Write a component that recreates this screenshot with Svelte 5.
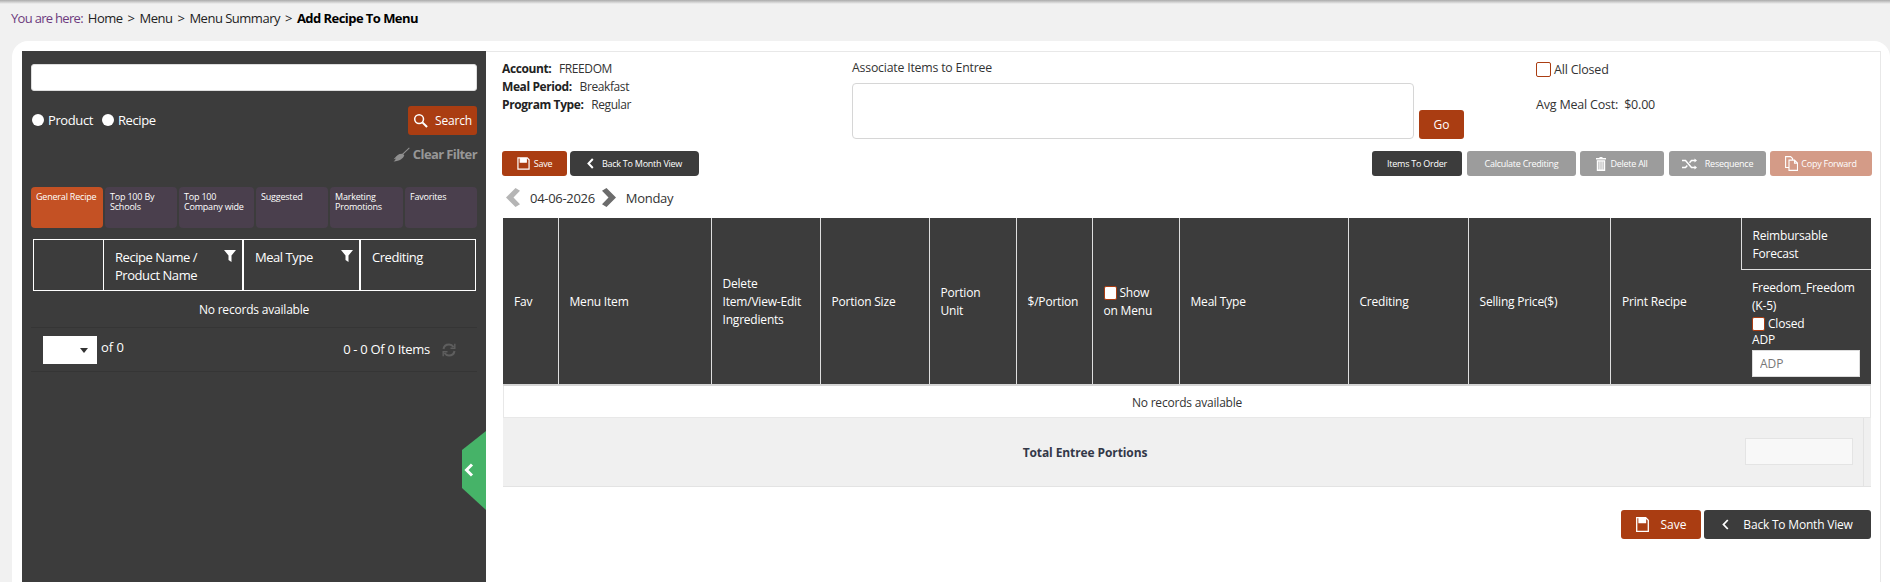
<script lang="ts">
	const tabs = [
		{ label: 'General Recipe', width: 72, active: true },
		{ label: 'Top 100 By Schools', width: 72 },
		{ label: 'Top 100 Company wide', width: 75 },
		{ label: 'Suggested', width: 72 },
		{ label: 'Marketing Promotions', width: 73 },
		{ label: 'Favorites', width: 72 }
	];

	const columns = [
		{ label: 'Fav', width: 55 },
		{ label: 'Menu Item', width: 153 },
		{ label: 'Delete Item/View-Edit Ingredients', width: 109 },
		{ label: 'Portion Size', width: 109 },
		{ label: 'Portion\nUnit', width: 87 },
		{ label: '$/Portion', width: 76 }
	];

	const trailing = [
		{ label: 'Meal Type', width: 169 },
		{ label: 'Crediting', width: 120 },
		{ label: 'Selling Price($)', width: 142.5 },
		{ label: 'Print Recipe', width: 130.5 }
	];
</script>

<div class="page">
	<div class="topbar"></div>
	<nav class="crumbs">
		<span class="here">You are here:</span>
		<span>Home</span><i>&gt;</i>
		<span>Menu</span><i>&gt;</i>
		<span>Menu Summary</span><i>&gt;</i>
		<b>Add Recipe To Menu</b>
	</nav>

	<div class="card">
		<aside class="side">
			<input class="search" type="text" />

			<div class="search-row">
				<label class="radio"><span class="dot"></span>Product</label>
				<label class="radio"><span class="dot"></span>Recipe</label>
				<button class="btn rust search-btn">
					<svg width="15" height="15" viewBox="0 0 16 16" fill="none" stroke="#fff" stroke-width="1.6">
						<circle cx="6.5" cy="6.5" r="4.7" />
						<path d="M10 10l5 5" stroke-width="2.2" />
					</svg>
					Search
				</button>
			</div>

			<div class="clear">
				<svg width="17" height="15" viewBox="0 0 17 15" fill="#8f8f8f">
					<path d="M16 .5l.7.8-6.3 6 .9 1.2C10 11.500 7 14 .5 14.500 2 13.500 2.500 12.500 2.700 11.500 2 12 1.300 12.200.6 12.300 2.500 10.500 4 8 6.500 7l2.800-.3z" />
				</svg>
				<span>Clear Filter</span>
			</div>

			<div class="tabs">
				{#each tabs as tab}
					<div class="tab" class:active={tab.active} style="width:{tab.width}px">{tab.label}</div>
				{/each}
			</div>

			<div class="side-head">
				<div class="head-cell blank"></div>
				<div class="head-cell name">
					<span>Recipe Name / Product Name</span>
					<svg class="funnel" width="12" height="12" viewBox="0 0 12 12" fill="#fff"><path d="M0 0h12L7.500 5.500V12L4.500 10V5.500z" /></svg>
				</div>
				<div class="head-cell type">
					<span>Meal Type</span>
					<svg class="funnel" width="12" height="12" viewBox="0 0 12 12" fill="#fff"><path d="M0 0h12L7.500 5.500V12L4.500 10V5.500z" /></svg>
				</div>
				<div class="head-cell cred"><span>Crediting</span></div>
			</div>

			<div class="side-empty">No records available</div>

			<div class="pager">
				<div class="page-select"><span class="caret"></span></div>
				<span class="of">of 0</span>
				<span class="items">0 - 0 Of 0 Items</span>
				<svg class="refresh" width="14" height="14" viewBox="0 0 14 14" fill="none" stroke="#5e5e5e" stroke-width="2">
					<path d="M1.500 6C2 3 4.500 1.500 7 1.500c2 0 3.500 1 4.500 2.500" />
					<path d="M12.500 8c-.5 3-3 4.500-5.500 4.500-2 0-3.500-1-4.500-2.500" />
					<path d="M12.800.8v4.400H8.500M1.200 13.200V8.800h4.300" stroke-width="1.400" />
				</svg>
			</div>

			<button class="collapse" aria-label="Collapse panel">
				<svg width="10" height="14" viewBox="0 0 10 14" fill="none" stroke="#fff" stroke-width="3"><path d="M8 1.500L2.500 7 8 12.500" /></svg>
			</button>
		</aside>

		<main class="main">
			<section class="info">
				<div class="meta">
					<div><b>Account:</b> <span>FREEDOM</span></div>
					<div><b>Meal Period:</b> <span>Breakfast</span></div>
					<div><b>Program Type:</b> <span>Regular</span></div>
				</div>
				<div class="assoc">
					<div class="assoc-label">Associate Items to Entree</div>
					<div class="assoc-row">
						<textarea></textarea>
						<button class="btn rust go">Go</button>
					</div>
				</div>
				<div class="totals">
					<label class="all-closed"><span class="check"></span>All Closed</label>
					<div class="avg">Avg Meal Cost:&nbsp; $0.00</div>
				</div>
			</section>

			<section class="toolbar">
				<button class="btn rust small save-sm">
					<svg width="13" height="13" viewBox="0 0 14 14" fill="none" stroke="#fff" stroke-width="1.300">
						<path d="M1 1h10l2 2v10H1z" />
						<path d="M3.500 1v4.500h6.500V1" fill="#fff" />
					</svg>
					Save
				</button>
				<button class="btn dark small back-sm">
					<svg width="7" height="11" viewBox="0 0 7 11" fill="none" stroke="#fff" stroke-width="2"><path d="M5.800 1L1.500 5.500l4.300 4.500" /></svg>
					Back To Month View
				</button>
				<div class="spacer"></div>
				<button class="btn dark small order">Items To Order</button>
				<button class="btn grey small calc">Calculate Crediting</button>
				<button class="btn grey small del">
					<svg width="10" height="14" viewBox="0 0 10 14" fill="#fff"><path d="M3.500 0h3v1H10v1.500H0V1h3.500zM.8 3.300h8.400V14H.8zM2.500 4.500v8h.8v-8zm2.100 0v8h.8v-8zm2.100 0v8h.8v-8z" fill-rule="evenodd" /></svg>
					Delete All
				</button>
				<button class="btn grey small reseq">
					<svg width="15" height="12" viewBox="0 0 15 12" fill="none" stroke="#fff" stroke-width="1.500">
						<path d="M0 2.500h3.500l6 7H13M0 9.500h3.500l1.800-2.100M7.500 4.700l2-2.200H13" />
						<path d="M12.500 0.500l2.500 2-2.500 2zM12.500 7.500l2.500 2-2.500 2z" fill="#fff" stroke="none" />
					</svg>
					Resequence
				</button>
				<button class="btn blush small copy">
					<svg width="13" height="15" viewBox="0 0 13 15" fill="none" stroke="#fff" stroke-width="1.100">
						<path d="M4 11.500H.6V.6h5l2 2v1.500" />
						<path d="M4 4.100h5.500l3 3v7.300H4zM9.500 4.100v3h3" />
					</svg>
					Copy Forward
				</button>
			</section>

			<section class="date-row">
				<svg width="14" height="19" viewBox="0 0 14 19" fill="#b5b5b5"><path d="M9.500 0L14 2.800 7.500 9.500l6.500 6.700L9.500 19 0 9.500z" /></svg>
				<span class="date">04-06-2026</span>
				<svg width="14" height="19" viewBox="0 0 14 19" fill="#6c6c6c"><path d="M4.500 0L0 2.800l6.500 6.700L0 16.200 4.500 19 14 9.500z" /></svg>
				<span class="day">Monday</span>
			</section>

			<table class="grid">
				<thead>
					<tr>
						{#each columns as col}
							<th rowspan="2" style="width:{col.width}px">{col.label}</th>
						{/each}
						<th rowspan="2" class="show" style="width:87px"><span class="check light"></span> Show<br />on Menu</th>
						{#each trailing as col}
							<th rowspan="2" style="width:{col.width}px">{col.label}</th>
						{/each}
						<th class="forecast">Reimbursable Forecast</th>
					</tr>
					<tr>
						<th class="school">
							Freedom_Freedom (K-5)
							<label class="closed"><span class="check light"></span>Closed</label>
							<div class="adp-label">ADP</div>
							<input class="adp" placeholder="ADP" />
						</th>
					</tr>
				</thead>
			</table>
			<div class="grid-empty">No records available</div>
			<div class="total-row">
				<b>Total Entree Portions</b>
				<input class="total-input" />
				<span class="total-edge"></span>
			</div>

			<section class="footer-actions">
				<button class="btn rust big save-lg">
					<svg width="13" height="15" viewBox="0 0 13 15" fill="none" stroke="#fff" stroke-width="1.300">
						<path d="M.7.7h9l2.600 2.600v11H.7z" />
						<path d="M3 .7v5h6.500v-5" fill="#fff" />
					</svg>
					Save
				</button>
				<button class="btn dark big back-lg">
					<svg width="7" height="11" viewBox="0 0 7 11" fill="none" stroke="#fff" stroke-width="1.800"><path d="M5.800 1L1.500 5.500l4.300 4.500" /></svg>
					Back To Month View
				</button>
			</section>
		</main>
	</div>
</div>

<style>
	:global(body) {
		margin: 0;
		background: #f1f1f1;
		font-family: 'Open Sans', 'Noto Sans', sans-serif;
		color: #333;
	}

	.page {
		height: 582px;
		overflow: hidden;
		font-size: 12px;
	}

	.topbar {
		height: 4px;
		background: linear-gradient(#ababab, #f1f1f1);
	}

	.crumbs {
		display: flex;
		gap: 5px;
		height: 37px;
		padding: 4px 0 0 11px;
		box-sizing: border-box;
		font-size: 13px;
		line-height: 20px;
		color: #222;
		letter-spacing: -0.5px;
		white-space: nowrap;
	}

	.crumbs .here {
		color: #6d3b7e;
		letter-spacing: -0.7px;
	}

	.crumbs i {
		font-style: normal;
	}

	.crumbs b {
		color: #000;
		letter-spacing: -0.55px;
	}

	.card {
		display: flex;
		height: 541px;
		margin-left: 12px;
		padding: 10px 9px 0 10px;
		box-sizing: border-box;
		background: #fff;
		border-radius: 16px 16px 0 0;
	}

	.side {
		position: relative;
		flex: 0 0 464px;
		box-sizing: border-box;
		padding: 13px 9px 0;
		background: #3c3c3c;
		color: #fff;
	}

	.search {
		display: block;
		width: 446px;
		height: 27px;
		box-sizing: border-box;
		border: 1px solid #ddd;
		border-radius: 3px;
		background: #fff;
	}

	.search-row {
		display: flex;
		align-items: center;
		gap: 8px;
		margin-top: 15px;
		height: 29px;
	}

	.radio {
		display: flex;
		align-items: center;
		gap: 4px;
		margin: -2px 0 0 1px;
		font-size: 13px;
		letter-spacing: -0.4px;
	}

	.dot {
		width: 12px;
		height: 12px;
		border-radius: 50%;
		background: #fff;
	}

	.btn {
		display: inline-flex;
		align-items: center;
		justify-content: center;
		box-sizing: border-box;
		border: 0;
		border-radius: 3px;
		color: #fff;
		font-family: inherit;
		white-space: nowrap;
		padding: 0;
	}

	.rust {
		background: #aa3d12;
	}

	.dark {
		background: #3c3c3c;
	}

	.grey {
		background: #9c9c9c;
	}

	.blush {
		background: #d49b87;
	}

	.search-btn {
		margin-left: auto;
		width: 69px;
		height: 29px;
		font-size: 12px;
		gap: 7px;
		letter-spacing: -0.2px;
	}

	.clear {
		display: flex;
		justify-content: flex-end;
		align-items: center;
		gap: 3px;
		height: 16px;
		margin-top: 11px;
		color: #979797;
		font-weight: 700;
		font-size: 13px;
		letter-spacing: -0.6px;
	}

	.tabs {
		display: flex;
		gap: 2px;
		margin-top: 25px;
	}

	.tab {
		box-sizing: border-box;
		height: 41px;
		padding: 5px 3px 0 5px;
		border-radius: 4px;
		background: #4a3f4d;
		font-size: 9px;
		line-height: 10px;
		letter-spacing: -0.2px;
	}

	.tab.active {
		background: #c45124;
		white-space: nowrap;
	}

	.side-head {
		display: flex;
		margin: 11px 1px 0 2px;
	}

	.head-cell {
		display: flex;
		justify-content: space-between;
		box-sizing: border-box;
		height: 52px;
		border: 1px solid #fff;
		padding: 8px 6px 0 11px;
		font-size: 13px;
		line-height: 18px;
		letter-spacing: -0.45px;
	}

	.blank {
		width: 70px;
		border-right: 0;
	}

	.name {
		width: 140px;
	}

	.name span {
		width: 100px;
	}

	.type {
		width: 117px;
	}

	.cred {
		width: 116px;
	}

	.funnel {
		flex: none;
		margin-top: 2px;
	}

	.side-empty {
		height: 36px;
		text-align: center;
		line-height: 38px;
		font-size: 12px;
		border-bottom: 1px solid #353535;
		letter-spacing: -0.2px;
	}

	.pager {
		display: flex;
		align-items: center;
		height: 43px;
		padding: 0 21px 0 12px;
		border-bottom: 1px solid #353535;
		font-size: 13px;
	}

	.page-select {
		position: relative;
		width: 54px;
		height: 28px;
		background: #fff;
	}

	.caret {
		position: absolute;
		left: 37px;
		top: 12px;
		border: 4px solid transparent;
		border-top: 5px solid #333;
		border-bottom: 0;
	}

	.of {
		margin: -5px 0 0 4px;
		font-size: 13px;
	}

	.items {
		margin: -1px 0 0 auto;
		letter-spacing: -0.3px;
	}

	.refresh {
		margin-left: 12px;
	}

	.collapse {
		position: absolute;
		right: 0;
		top: 380px;
		width: 24px;
		height: 79px;
		padding: 0 0 2px 2px;
		border: 0;
		background: #46b368;
		clip-path: polygon(100% 0, 0 24%, 0 72%, 100% 100%);
		display: flex;
		align-items: center;
	}

	.main {
		flex: 1;
		min-width: 0;
		box-sizing: border-box;
		padding: 0 8px 0 17px;
		border-top: 1px solid #e8e8e8;
		border-right: 1px solid #e8e8e8;
		font-size: 12px;
	}

	.info {
		display: flex;
		height: 98px;
	}

	.meta {
		flex: 0 0 349px;
		margin-left: -1px;
		padding: 8px 1px 0 0;
		line-height: 18px;
		font-size: 12px;
		letter-spacing: -0.4px;
		color: #333;
	}

	.meta b {
		color: #222;
		margin-right: 5px;
	}

	.assoc {
		flex: 0 0 684px;
	}

	.assoc-label {
		margin-top: 7px;
		line-height: 18px;
		font-size: 12.3px;
		letter-spacing: -0.2px;
	}

	.assoc-row {
		display: flex;
		align-items: flex-end;
		gap: 5px;
		margin-top: 6px;
	}

	textarea {
		display: block;
		width: 562px;
		height: 56px;
		box-sizing: border-box;
		border: 1px solid #d6d6d6;
		border-radius: 4px;
		background: #fff;
		resize: none;
		margin: 0;
	}

	.go {
		width: 45px;
		height: 29px;
		font-size: 12px;
	}

	.totals {
		padding: 9px 0 0;
		font-size: 12.5px;
		letter-spacing: -0.2px;
	}

	.all-closed {
		display: flex;
		align-items: center;
		gap: 3px;
		height: 16px;
	}

	.check {
		display: inline-block;
		width: 15px;
		height: 15px;
		box-sizing: border-box;
		border: 1px solid #aa3d12;
		border-radius: 2px;
		background: #fff;
		vertical-align: -3px;
	}

	.check.light {
		width: 13px;
		height: 14px;
	}

	.avg {
		margin-top: 19px;
		line-height: 18px;
	}

	.toolbar {
		display: flex;
		height: 25px;
		margin: 1px 0 0 -1px;
	}

	.spacer {
		flex: 1;
	}

	.small {
		height: 25px;
		font-size: 9px;
		letter-spacing: -0.25px;
	}

	.save-sm {
		width: 65px;
		gap: 4px;
		margin-right: 3px;
	}

	.back-sm {
		width: 129px;
		gap: 8px;
		border-radius: 4px;
	}

	.order {
		width: 90px;
		margin-right: 5px;
	}

	.calc {
		width: 109px;
		margin-right: 4px;
	}

	.del {
		width: 84px;
		gap: 4px;
		margin-right: 5px;
	}

	.reseq {
		width: 97px;
		gap: 8px;
		margin-right: 4px;
	}

	.copy {
		width: 102px;
		gap: 3px;
	}

	.date-row {
		display: flex;
		align-items: center;
		height: 42px;
		padding: 1px 0 0 3px;
		box-sizing: border-box;
		font-size: 13px;
		letter-spacing: -0.3px;
	}

	.date {
		margin: 0 7px 0 10px;
	}

	.day {
		margin-left: 10px;
	}

	.grid {
		width: 1368px;
		table-layout: fixed;
		border-collapse: collapse;
		background: #3c3c3c;
		color: #fff;
		border-bottom: 2px solid #d5d5d5;
	}

	.grid th {
		box-sizing: border-box;
		padding: 2px 10px 0 11px;
		font-weight: 400;
		text-align: left;
		font-size: 12px;
		line-height: 18px;
		border-left: 1px solid #dedede;
		letter-spacing: -0.2px;
		white-space: pre-line;
	}

	.grid th:first-child {
		border-left: 0;
	}

	.forecast {
		height: 51px;
		padding-top: 3px !important;
		border-bottom: 1px solid #dedede;
	}

	.school {
		height: 116px;
		vertical-align: top;
		padding-top: 9px !important;
		white-space: normal !important;
	}

	.closed {
		display: flex;
		align-items: center;
		gap: 3px;
		height: 18px;
	}

	.adp-label {
		line-height: 14px;
		margin-top: 0;
	}

	.adp {
		display: block;
		box-sizing: border-box;
		width: 108px;
		height: 27px;
		border: 1px solid #ddd;
		padding: 0 7px;
		margin-top: 3px;
		background: #fff;
		font-family: inherit;
		font-size: 12px;
	}

	.adp::placeholder {
		color: #777;
	}

	.grid-empty {
		box-sizing: border-box;
		width: 1368px;
		height: 32px;
		line-height: 33px;
		text-align: center;
		border: 1px solid #e8e8e8;
		border-top: 0;
		letter-spacing: -0.2px;
	}

	.total-row {
		position: relative;
		display: flex;
		align-items: center;
		justify-content: center;
		box-sizing: border-box;
		width: 1368px;
		height: 69px;
		padding-right: 204px;
		background: #f0f0f0;
		border-bottom: 1px solid #e3e3e3;
		color: #333848;
		letter-spacing: -0.1px;
	}

	.total-input {
		position: absolute;
		right: 18px;
		top: 20px;
		width: 108px;
		height: 27px;
		box-sizing: border-box;
		border: 1px solid #e4e4e4;
		background: #f8f8f8;
	}

	.total-edge {
		position: absolute;
		right: 7px;
		top: 0;
		bottom: 0;
		border-left: 1px solid #e3e3e3;
	}

	.footer-actions {
		display: flex;
		justify-content: flex-end;
		gap: 3px;
		width: 1368px;
		margin-top: 23px;
	}

	.big {
		height: 29px;
		font-size: 12px;
	}

	.save-lg {
		width: 80px;
		gap: 12px;
	}

	.back-lg {
		width: 167px;
		gap: 14px;
		letter-spacing: -0.2px;
	}
</style>
